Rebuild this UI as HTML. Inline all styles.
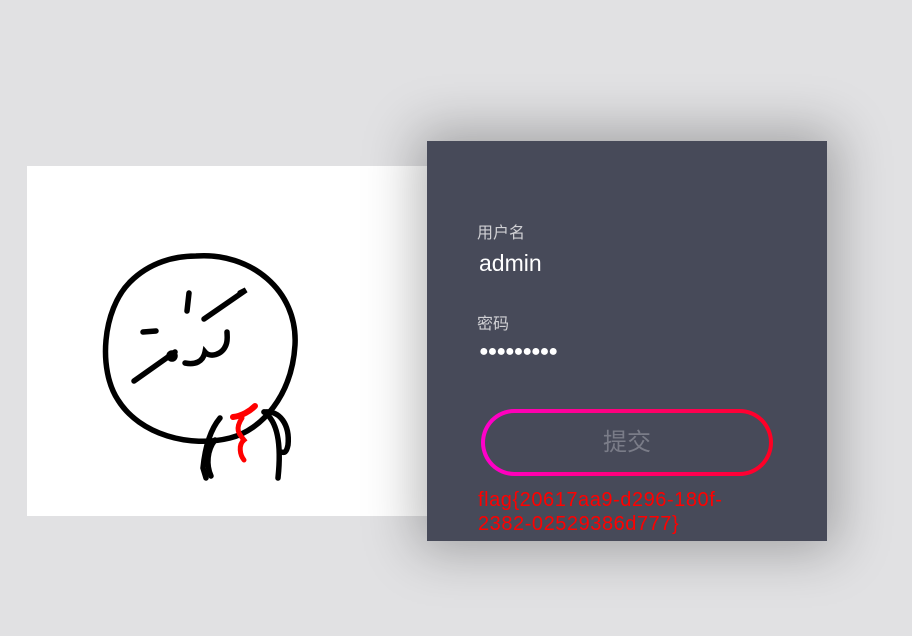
<!DOCTYPE html>
<html><head><meta charset="utf-8"><style>
html,body{margin:0;padding:0}
body{width:912px;height:636px;background:#e1e1e3;position:relative;overflow:hidden;font-family:"Liberation Sans","Noto Sans CJK SC",sans-serif}
.card{position:absolute;left:27px;top:166px;width:400px;height:350px;background:#fff}
.panel{position:absolute;left:427px;top:141px;width:400px;height:400px;background:#474a59;box-shadow:0 0 50px 10px rgba(0,0,0,0.28)}
.lbl{position:absolute;left:50px;color:#d0d0d4;font-size:16px}
.val{position:absolute;left:52px;color:#fff;font-size:23px}
.btn{position:absolute;left:54px;top:268px;width:292px;height:67px;border-radius:34px;padding:4px;background:linear-gradient(90deg,#f0c 0%,#f02 100%);box-sizing:border-box}
.btn div{width:100%;height:100%;border-radius:30px;background:#474a59;color:#7a7c88;font-size:24px;text-align:center;line-height:59px}
.flag{position:absolute;left:51px;top:347px;color:#f00;font-family:"Liberation Sans","Noto Sans CJK SC",sans-serif;font-size:20px;letter-spacing:0.55px;line-height:24px;width:320px}
</style></head><body>
<div class="card">
<svg width="400" height="350" viewBox="27 166 400 350" style="position:absolute;left:0;top:0" fill="none" stroke="#000" stroke-width="5.5" stroke-linecap="round">
<path d="M196 256 C250 252 298 290 295 345 C292 395 262 430 230 438 C190 448 140 435 118 400 C98 370 102 310 130 282 C150 262 175 256 196 256Z"/>
<path d="M189 293 L187 311"/>
<path d="M204 319 L246 290 L240 293"/>
<path d="M143 332 L156 331"/>
<path d="M134 381 L175 352"/>
<circle cx="172" cy="356" r="3" fill="#000"/>
<path d="M185 363 C195 365 203 362 205 352 C210 358 222 355 226 345 C228 340 227 335 227 332"/>
<path d="M220 418 C210 430 205 448 203 468 L206 478"/>
<path d="M264 412 C276 420 282 440 278 478"/>
<path d="M264 412 C280 410 290 425 288 445 C286 455 283 452 280 452"/>
<path d="M215 440 C207 450 206 465 211 476"/>
<path d="M233 417 C242 416 250 411 255 406" stroke="#f00" stroke-width="6"/>
<path d="M242 418 C234 430 240 435 244 440 C238 445 240 455 244 460" stroke="#f00" stroke-width="5"/>
</svg>
</div>
<div class="panel">
<div class="lbl" style="top:78px">用户名</div>
<div class="val" style="top:109px">admin</div>
<div class="lbl" style="top:169px">密码</div>
<div class="val" style="top:202px;font-size:16px;letter-spacing:-1px">●●●●●●●●●</div>
<div class="btn"><div>提交</div></div>
<div class="flag">flag{20617aa9-d296-180f-<br>2382-02529386d777}</div>
</div>
</body></html>
